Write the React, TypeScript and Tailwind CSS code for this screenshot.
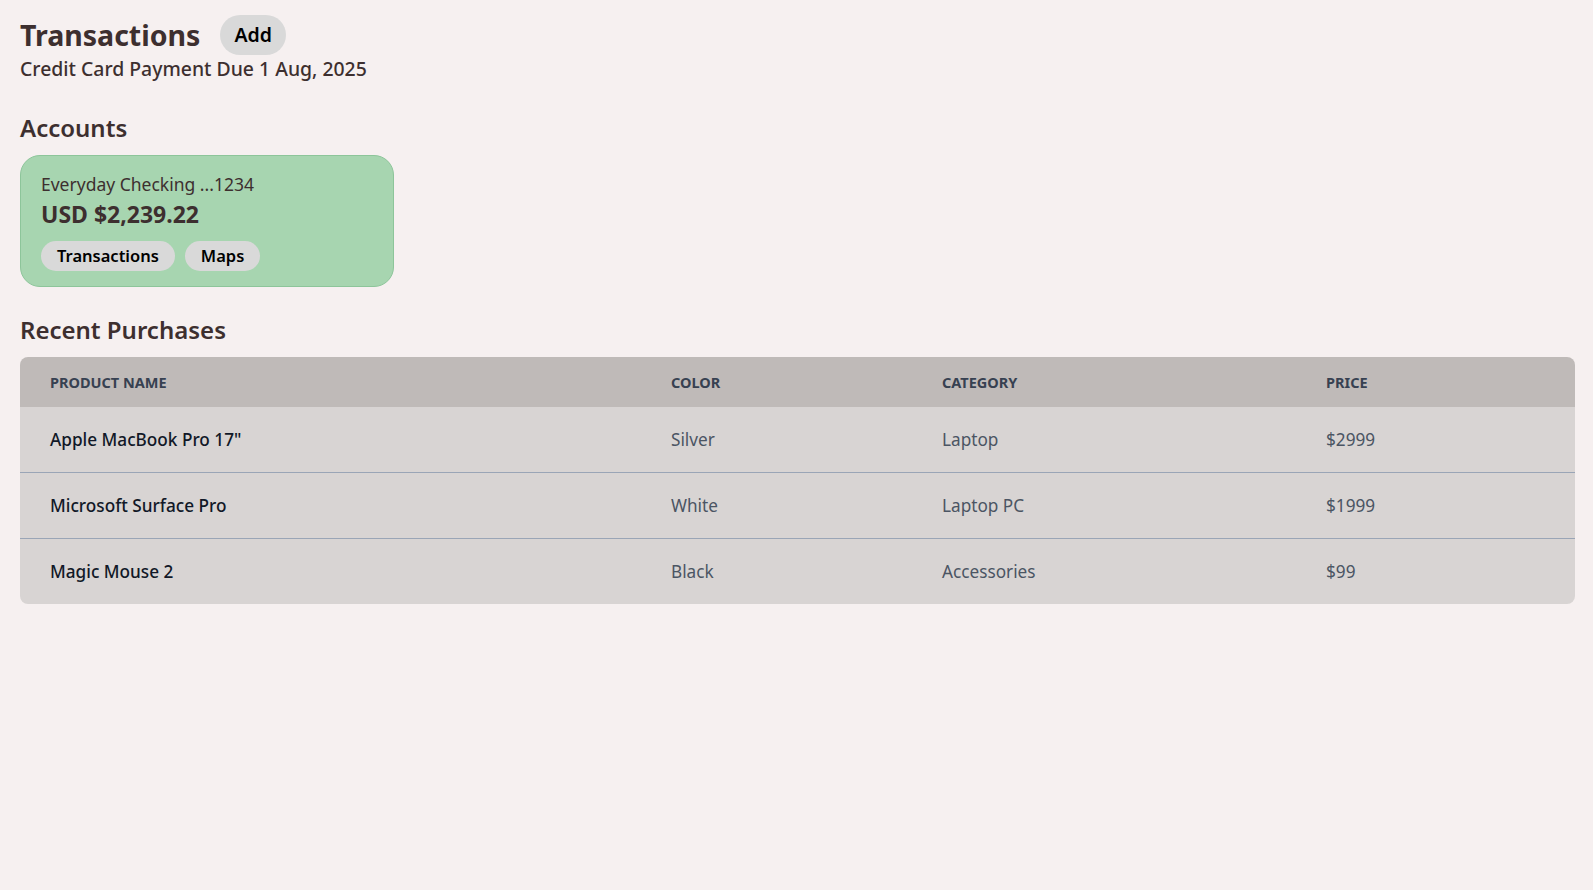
const purchases = [
  { name: 'Apple MacBook Pro 17"', color: "Silver", category: "Laptop", price: "$2999" },
  { name: "Microsoft Surface Pro", color: "White", category: "Laptop PC", price: "$1999" },
  { name: "Magic Mouse 2", color: "Black", category: "Accessories", price: "$99" },
];

function Pill({ children }: { children: React.ReactNode }) {
  return (
    <button className="h-[30px] rounded-full bg-[#d9d9d9] px-4 text-[16.5px] font-semibold leading-[30px] text-black">
      {children}
    </button>
  );
}

export default function App() {
  return (
    <div
      className="min-h-[890px] bg-[#f6f0f0] pl-5 pr-[18px] pt-[15px] text-[#3d2f2f]"
      style={{ fontFamily: '"Noto Sans", "Open Sans", sans-serif' }}
    >
      <div className="flex h-10 items-center gap-5">
        <h1 className="text-[28.5px] font-bold leading-9">Transactions</h1>
        <button className="h-10 rounded-full bg-[#d9d9d9] px-3.5 text-[19.5px] font-semibold text-black">
          Add
        </button>
      </div>
      <p className="text-[19.4px] font-medium leading-7">Credit Card Payment Due 1 Aug, 2025</p>

      <h2 className="mt-[29px] text-2xl font-semibold leading-8">Accounts</h2>
      <div className="mt-[11px] w-[374px] rounded-[20px] border border-[#8dc59a] bg-[#a7d5b0] px-5 pt-[14px] pb-[15px]">
        <div className="text-[17.5px] leading-7">Everyday Checking ...1234</div>
        <div className="text-[23px] font-bold leading-8">USD $2,239.22</div>
        <div className="mt-[11px] flex gap-2.5">
          <Pill>Transactions</Pill>
          <Pill>Maps</Pill>
        </div>
      </div>

      <h2 className="mt-[27px] text-2xl font-semibold leading-8">Recent Purchases</h2>
      <div className="mt-[11px] overflow-hidden rounded-lg">
        <table className="w-full table-fixed text-left">
          <thead className="bg-[#bfbab8] text-[14.5px] font-bold uppercase text-[#374151]">
            <tr>
              <th className="w-[621px] px-[30px] py-[15px] leading-5">Product name</th>
              <th className="w-[271px] px-[30px] py-[15px] leading-5">Color</th>
              <th className="w-[384px] px-[30px] py-[15px] leading-5">Category</th>
              <th className="px-[30px] py-[15px] leading-5">Price</th>
            </tr>
          </thead>
          <tbody className="bg-[#d8d4d3] text-[17.2px]">
            {purchases.map((p, i) => (
              <tr key={p.name} className={i < purchases.length - 1 ? "border-b border-[#9aa5b6]" : ""}>
                <td className="px-[30px] py-[18.5px] font-medium leading-7 text-[#111827]">{p.name}</td>
                <td className="px-[30px] py-[18.5px] leading-7 text-[#4b5563]">{p.color}</td>
                <td className="px-[30px] py-[18.5px] leading-7 text-[#4b5563]">{p.category}</td>
                <td className="px-[30px] py-[18.5px] leading-7 text-[#4b5563]">{p.price}</td>
              </tr>
            ))}
          </tbody>
        </table>
      </div>
    </div>
  );
}
